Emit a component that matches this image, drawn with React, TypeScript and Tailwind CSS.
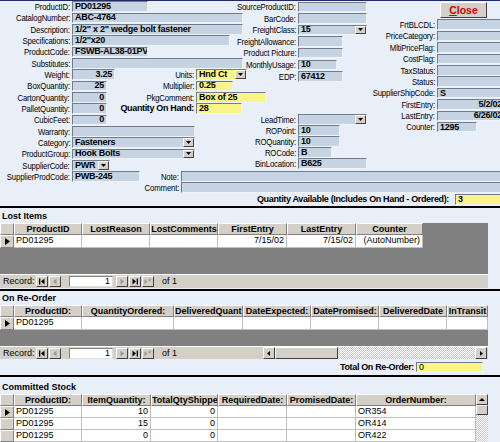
import React from 'react'

const fieldBase =
  'h-[10.5px] shrink-0 flex items-center overflow-hidden border border-[#6f7c8c] border-r-[#eef3f8] border-b-[#eef3f8]'

function DropBtn() {
  return (
    <div className="w-[11px] h-full shrink-0 bg-[#d4d0c8] border border-t-white border-l-white border-r-[#404040] border-b-[#404040] flex items-center justify-center">
      <svg width="5" height="3" viewBox="0 0 5 3">
        <polygon points="0,0 5,0 2.5,3" fill="#000" />
      </svg>
    </div>
  )
}

function Field({
  w,
  v = '',
  right = false,
  yellow = false,
  drop = false,
  bold = true,
}: {
  w: string
  v?: string
  right?: boolean
  yellow?: boolean
  drop?: boolean
  bold?: boolean
}) {
  return (
    <div className={`${fieldBase} ${w} ${yellow ? 'bg-[#f8f488]' : 'bg-[#c5d3e3]'}`}>
      <span
        className={`flex-1 whitespace-nowrap px-[2px] text-[9px] leading-none tracking-[-0.25px] ${bold ? 'font-bold' : ''} ${right ? 'text-right' : ''}`}
      >
        {v}
      </span>
      {drop && <DropBtn />}
    </div>
  )
}

function Label({ w, t, bold = false }: { w: string; t: string; bold?: boolean }) {
  return (
    <div className={`${w} shrink-0 flex justify-end pr-[2px]`}>
      {bold ? (
        <span className="shrink-0 whitespace-nowrap leading-none font-bold text-[9px] tracking-[-0.35px]">{t}</span>
      ) : (
        <span className="shrink-0 inline-block origin-right scale-x-[0.82] whitespace-nowrap leading-none text-[9.5px] tracking-[-0.2px]">
          {t}
        </span>
      )}
    </div>
  )
}

function LRow({ children }: { children: React.ReactNode }) {
  return <div className="h-[11.33px] flex items-center">{children}</div>
}

function MRow({ t, f, h = 'h-[11.6px]' }: { t: string; f: React.ReactNode; h?: string }) {
  return (
    <div className={`${h} flex items-center`}>
      <Label w="w-[32px]" t={t} />
      {f}
    </div>
  )
}

function RRow({ t, f }: { t: string; f: React.ReactNode }) {
  return (
    <div className="h-[11.4px] flex items-center">
      <Label w="w-[67px]" t={t} />
      {f}
    </div>
  )
}

type Glyph = 'first' | 'prev' | 'next' | 'last' | 'new' | 'left' | 'right' | 'up'

function Icon({ g, off }: { g: Glyph; off?: boolean }) {
  const c = off ? '#9a9a9a' : '#000'
  return (
    <svg width="8" height="7" viewBox="0 0 8 7">
      {g === 'first' && (
        <>
          <rect x="1" y="0.5" width="1.3" height="6" fill={c} />
          <polygon points="6.5,0.5 3,3.5 6.5,6.5" fill={c} />
        </>
      )}
      {g === 'prev' && <polygon points="5.5,0.5 2,3.5 5.5,6.5" fill={c} />}
      {g === 'next' && <polygon points="2.5,0.5 6,3.5 2.5,6.5" fill={c} />}
      {g === 'last' && (
        <>
          <polygon points="1.5,0.5 5,3.5 1.5,6.5" fill={c} />
          <rect x="5.7" y="0.5" width="1.3" height="6" fill={c} />
        </>
      )}
      {g === 'new' && (
        <>
          <polygon points="0.5,1 3.5,3.8 0.5,6.5" fill={c} />
          <path d="M5.8 0.5v3M4.3 2h3M4.7 0.9l2.2 2.2M6.9 0.9l-2.2 2.2" stroke={c} strokeWidth="0.7" />
        </>
      )}
      {g === 'left' && <polygon points="5,1 2,3.5 5,6" fill={c} />}
      {g === 'right' && <polygon points="3,1 6,3.5 3,6" fill={c} />}
      {g === 'up' && <polygon points="1,5 4,2 7,5" fill={c} />}
    </svg>
  )
}

function Btn({ g, off, cls = 'w-[12px] h-[11px]' }: { g: Glyph; off?: boolean; cls?: string }) {
  return (
    <div
      className={`${cls} shrink-0 bg-[#d4d0c8] border border-t-white border-l-white border-r-[#404040] border-b-[#404040] flex items-center justify-center`}
    >
      <Icon g={g} off={off} />
    </div>
  )
}

const dither =
  'bg-[repeating-conic-gradient(#ffffff_0_25%,#c8c8c8_0_50%)] bg-[length:2px_2px]'

function NavBar({ scroll = false, h = 'h-[14px]' }: { scroll?: boolean; h?: string }) {
  return (
    <div className={`${h} bg-[#d4d0c8] flex items-center text-[9px] border-t border-t-white`}>
      <span className="ml-[3px] w-[33px] shrink-0 leading-none">Record:</span>
      <Btn g="first" />
      <div className="ml-px">
        <Btn g="prev" off />
      </div>
      <div className="ml-[8px] w-[44px] h-[11px] shrink-0 bg-white border border-[#808080] border-r-[#e0e0e0] border-b-[#e0e0e0] text-right pr-[2px] leading-[9px]">
        1
      </div>
      <div className="ml-[3px]">
        <Btn g="next" off />
      </div>
      <div className="ml-px">
        <Btn g="last" />
      </div>
      <div className="ml-px">
        <Btn g="new" off />
      </div>
      <span className="ml-[8px] leading-none">of 1</span>
      {scroll && (
        <div className="ml-auto mr-px w-[224px] h-[12px] flex">
          <Btn g="left" cls="w-[12px] h-[12px]" />
          <div className="w-[63px] h-[12px] bg-[#d4d0c8] border border-t-white border-l-white border-r-[#404040] border-b-[#404040]" />
          <div className={`flex-1 h-[12px] ${dither}`} />
          <Btn g="right" cls="w-[12px] h-[12px]" />
        </div>
      )}
    </div>
  )
}

type Col = { w: string; h: string; right?: boolean }

function HeadRow({ cols }: { cols: Col[] }) {
  return (
    <div className="h-[12px] flex">
      <div className="w-[14px] shrink-0 bg-[#d4d0c8] border border-t-white border-l-white border-r-[#808080] border-b-[#808080]" />
      {cols.map((c, i) => (
        <div
          key={i}
          className={`${c.w} shrink-0 bg-[#d4d0c8] border border-t-white border-l-white border-r-[#808080] border-b-[#808080] overflow-hidden whitespace-nowrap text-center text-[9px] font-bold leading-[10px]`}
        >
          {c.h}
        </div>
      ))}
    </div>
  )
}

function DataRow({ cols, vals, cur, h = 'h-[12px]' }: { cols: Col[]; vals: string[]; cur?: boolean; h?: string }) {
  return (
    <div className={`${h} flex`}>
      <div className="w-[14px] shrink-0 bg-[#d4d0c8] border border-t-white border-l-white border-r-[#808080] border-b-[#808080] flex items-center justify-center">
        {cur && (
          <svg width="5" height="7" viewBox="0 0 5 7">
            <polygon points="0,0 5,3.5 0,7" fill="#000" />
          </svg>
        )}
      </div>
      {cols.map((c, i) => (
        <div
          key={i}
          className={`${c.w} shrink-0 bg-white border-r border-b border-[#c0c0c0] overflow-hidden whitespace-nowrap px-[2px] text-[9px] leading-[11px] ${c.right ? 'text-right' : ''}`}
        >
          {vals[i]}
        </div>
      ))}
    </div>
  )
}

function Title({ t, h }: { t: string; h: string }) {
  return (
    <div className={`${h} flex items-end pb-[2px] pl-[2px]`}>
      <span className="text-[9px] font-bold leading-none">{t}</span>
    </div>
  )
}

const lostCols: Col[] = [
  { w: 'w-[68px]', h: 'ProductID' },
  { w: 'w-[68px]', h: 'LostReason' },
  { w: 'w-[68px]', h: 'LostComments' },
  { w: 'w-[69px]', h: 'FirstEntry', right: true },
  { w: 'w-[69px]', h: 'LastEntry', right: true },
  { w: 'w-[67px]', h: 'Counter', right: true },
]

const reCols: Col[] = [
  { w: 'w-[68px]', h: 'ProductID:' },
  { w: 'w-[92px]', h: 'QuantityOrdered:' },
  { w: 'w-[69px]', h: 'DeliveredQuantity:' },
  { w: 'w-[68px]', h: 'DateExpected:' },
  { w: 'w-[68px]', h: 'DatePromised:' },
  { w: 'w-[68px]', h: 'DeliveredDate' },
  { w: 'w-[41px]', h: 'InTransit' },
]

const comCols: Col[] = [
  { w: 'w-[68px]', h: 'ProductID:' },
  { w: 'w-[69px]', h: 'ItemQuantity:', right: true },
  { w: 'w-[67px]', h: 'TotalQtyShipped:', right: true },
  { w: 'w-[69px]', h: 'RequiredDate:' },
  { w: 'w-[69px]', h: 'PromisedDate:' },
  { w: 'w-[120px]', h: 'OrderNumber:' },
]

function BlackLine() {
  return <div className="h-[2px] bg-black" />
}

export default function App() {
  return (
    <div className="w-[500px] h-[442px] overflow-hidden bg-[#e8eff8] text-black font-['Liberation_Sans',Arial,sans-serif]">
      <div className="h-px bg-[#1f2a6b]" />

      {/* main form */}
      <div className="h-[170px] flex">
        <div className="w-[266px] shrink-0 flex flex-col">
          <LRow>
            <Label w="w-[72px]" t="ProductID:" />
            <Field w="w-[76px]" v="PD01295" />
          </LRow>
          <LRow>
            <Label w="w-[72px]" t="CatalogNumber:" />
            <Field w="w-[171px]" v="ABC-4764" />
          </LRow>
          <LRow>
            <Label w="w-[72px]" t="Description:" />
            <Field w="w-[171px]" v={'1/2" x 2" wedge bolt fastener'} />
          </LRow>
          <LRow>
            <Label w="w-[72px]" t="Specifications:" />
            <Field w="w-[158px]" v={'1/2"x20'} />
          </LRow>
          <LRow>
            <Label w="w-[72px]" t="ProductCode:" />
            <Field w="w-[76px]" v="FSWB-AL38-01PV" />
          </LRow>
          <LRow>
            <Label w="w-[72px]" t="Substitutes:" />
            <Field w="w-[171px]" />
          </LRow>
          <LRow>
            <div className="w-[150px] shrink-0 flex items-center">
              <Label w="w-[72px]" t="Weight:" />
              <Field w="w-[43px]" v="3.25" right />
            </div>
            <Label w="w-[46px]" t="Units:" />
            <Field w="w-[51px]" v="Hnd Ct" yellow drop />
          </LRow>
          <LRow>
            <div className="w-[150px] shrink-0 flex items-center">
              <Label w="w-[72px]" t="BoxQuantity:" />
              <Field w="w-[35px]" v="25" right />
            </div>
            <Label w="w-[46px]" t="Multiplier:" />
            <Field w="w-[37px]" v="0.25" yellow />
          </LRow>
          <LRow>
            <div className="w-[150px] shrink-0 flex items-center">
              <Label w="w-[72px]" t="CartonQuantity:" />
              <Field w="w-[35px]" v="0" right />
            </div>
            <Label w="w-[46px]" t="PkgComment:" />
            <Field w="w-[70px]" v="Box of 25" yellow />
          </LRow>
          <LRow>
            <div className="w-[150px] shrink-0 flex items-center">
              <Label w="w-[72px]" t="PalletQuantity:" />
              <Field w="w-[35px]" v="0" right />
            </div>
            <Label w="w-[46px]" t="Quantity On Hand:" bold />
            <Field w="w-[46px]" v="28" yellow />
          </LRow>
          <LRow>
            <Label w="w-[72px]" t="CubicFeet:" />
            <Field w="w-[35px]" v="0" right />
          </LRow>
          <LRow>
            <Label w="w-[72px]" t="Warranty:" />
            <Field w="w-[123px]" />
          </LRow>
          <LRow>
            <Label w="w-[72px]" t="Category:" />
            <Field w="w-[123px]" v="Fasteners" drop />
          </LRow>
          <LRow>
            <Label w="w-[72px]" t="ProductGroup:" />
            <Field w="w-[123px]" v="Hook Bolts" drop />
          </LRow>
          <LRow>
            <Label w="w-[72px]" t="SupplierCode:" />
            <Field w="w-[38px]" v="PWR" drop />
          </LRow>
        </div>

        <div className="w-[104px] shrink-0 flex flex-col">
          <MRow t="SourceProductID:" f={<Field w="w-[69px]" />} />
          <MRow t="BarCode:" f={<Field w="w-[69px]" />} />
          <MRow t="FreightClass:" f={<Field w="w-[69px]" v="15" drop />} />
          <MRow t="FreightAllowance:" f={<Field w="w-[45px]" />} />
          <MRow t="Product Picture:" f={<Field w="w-[45px]" />} />
          <MRow t="MonthlyUsage:" f={<Field w="w-[39px]" v="10" />} />
          <MRow t="EDP:" f={<Field w="w-[45px]" v="67412" />} />
          <div className="mt-[32px]">
            <MRow h="h-[11px]" t="LeadTime:" f={<Field w="w-[69px]" drop />} />
            <MRow h="h-[11px]" t="ROPoint:" f={<Field w="w-[42px]" v="10" />} />
            <MRow h="h-[11px]" t="ROQuantity:" f={<Field w="w-[42px]" v="10" />} />
            <MRow h="h-[11px]" t="ROCode:" f={<Field w="w-[34px]" v="B" />} />
            <MRow h="h-[11px]" t="BinLocation:" f={<Field w="w-[69px]" v="B625" />} />
          </div>
        </div>

        <div className="flex-1 flex flex-col">
          <button className="ml-[70px] mt-[1px] w-[47px] h-[16px] shrink-0 bg-[#d4d0c8] border border-t-white border-l-white border-r-[#404040] border-b-[#404040] flex items-center justify-center">
            <span className="text-[10.5px] font-bold text-[#d40000] leading-none">
              <span className="underline">C</span>lose
            </span>
          </button>
          <div className="mt-px">
            <RRow t="FrtBLCDL:" f={<Field w="w-[68px]" />} />
            <RRow t="PriceCategory:" f={<Field w="w-[68px]" />} />
            <RRow t="MltiPriceFlag:" f={<Field w="w-[68px]" />} />
            <RRow t="CostFlag:" f={<Field w="w-[68px]" />} />
            <RRow t="TaxStatus:" f={<Field w="w-[68px]" />} />
            <RRow t="Status:" f={<Field w="w-[68px]" />} />
            <RRow t="SupplierShipCode:" f={<Field w="w-[68px]" v="S" />} />
            <RRow t="FirstEntry:" f={<Field w="w-[68px]" v="5/2/02" right />} />
            <RRow t="LastEntry:" f={<Field w="w-[68px]" v="6/26/02" right />} />
            <RRow t="Counter:" f={<Field w="w-[40px]" v="1295" />} />
          </div>
        </div>
      </div>

      <div className="h-[11px] flex items-center">
        <div className="w-[140px] shrink-0 flex items-center">
          <Label w="w-[72px]" t="SupplierProdCode:" />
          <Field w="w-[68px]" v="PWB-245" />
        </div>
        <Label w="w-[41px]" t="Note:" />
        <Field w="w-[330px]" />
      </div>
      <div className="h-[11px] flex items-center">
        <Label w="w-[181px]" t="Comment:" />
        <Field w="w-[330px]" />
      </div>
      <div className="h-[13px] flex items-center">
        <Label w="w-[451px]" t="Quantity Available (Includes On Hand - Ordered):" bold />
        <div className="ml-[4px]">
          <Field w="w-[50px]" v="3" yellow />
        </div>
      </div>

      <BlackLine />

      {/* Lost Items */}
      <Title t="Lost Items" h="h-[15px]" />
      <div className="w-[488px] bg-[#808080]">
        <HeadRow cols={lostCols} />
        <DataRow cols={lostCols} vals={['PD01295', '', '', '7/15/02', '7/15/02', '(AutoNumber)']} cur h="h-[13px]" />
        <div className="h-[26px]" />
        <NavBar />
      </div>
      <div className="h-px" />
      <BlackLine />

      {/* On Re-Order */}
      <Title t="On Re-Order" h="h-[14px]" />
      <div className="w-[488px] bg-[#808080]">
        <HeadRow cols={reCols} />
        <DataRow cols={reCols} vals={['PD01295', '', '', '', '', '', '']} cur h="h-[13px]" />
        <div className="h-[16px]" />
        <NavBar scroll h="h-[13px]" />
      </div>
      <div className="h-[16px] flex items-center justify-end pr-[17px]">
        <Label w="w-[120px]" t="Total On Re-Order:" bold />
        <Field w="w-[67px]" v="0" yellow bold={false} />
      </div>
      <BlackLine />

      {/* Committed Stock */}
      <Title t="Committed Stock" h="h-[17px]" />
      <div className="w-[488px] h-[60px] flex bg-[#808080]">
        <div className="w-[476px] shrink-0">
          <HeadRow cols={comCols} />
          <DataRow cols={comCols} vals={['PD01295', '10', '0', '', '', 'OR354']} cur />
          <DataRow cols={comCols} vals={['PD01295', '15', '0', '', '', 'OR414']} />
          <DataRow cols={comCols} vals={['PD01295', '0', '0', '', '', 'OR422']} />
          <DataRow cols={comCols} vals={['PD01295', '5', '0', '', '', 'OR430']} />
        </div>
        <div className="w-[12px] flex flex-col">
          <Btn g="up" cls="w-[12px] h-[11px]" />
          <div className="h-[10px] bg-[#d4d0c8] border border-t-white border-l-white border-r-[#404040] border-b-[#404040]" />
          <div className={`flex-1 ${dither}`} />
        </div>
      </div>
    </div>
  )
}
